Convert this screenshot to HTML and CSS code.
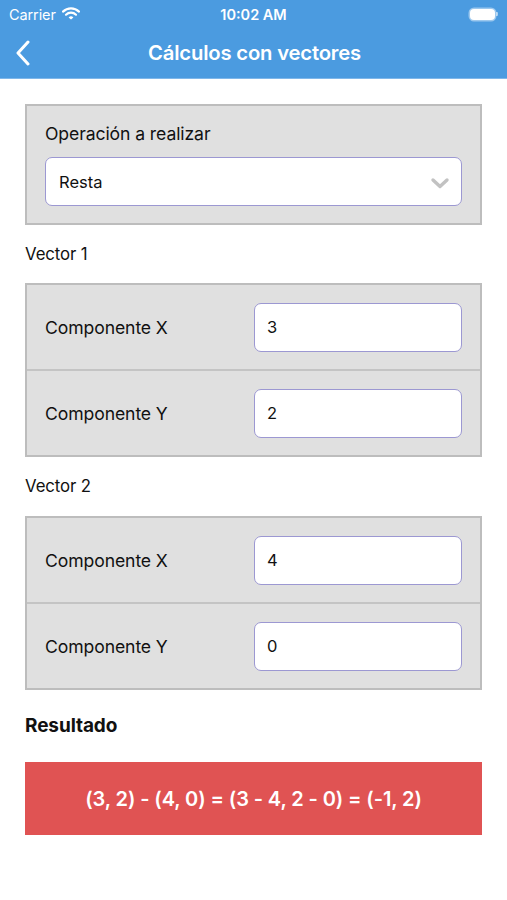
FILE: index.html
```html
<!DOCTYPE html>
<html lang="es">
<head>
<meta charset="utf-8">
<title>Cálculos con vectores</title>
<link rel="stylesheet" href="styles.css">
</head>
<body>
<header class="top">
  <div class="status">
    <div class="status-left">
      <span class="carrier">Carrier</span>
      <svg class="wifi" width="18" height="13" viewBox="0 0 18 13">
        <path d="M1 4.6 A11.5 11.5 0 0 1 17 4.6" fill="none" stroke="#fff" stroke-width="2.2" stroke-linecap="round"/>
        <path d="M4 7.7 A7.2 7.2 0 0 1 14 7.7" fill="none" stroke="#fff" stroke-width="2.2" stroke-linecap="round"/>
        <path d="M6.6 10.4 L9 12.6 L11.4 10.4 A3.4 3.4 0 0 0 6.6 10.4 Z" fill="#fff"/>
      </svg>
    </div>
    <span class="time">10:02 AM</span>
    <div class="battery"><span class="battery-body"></span><span class="battery-nub"></span></div>
  </div>
  <nav class="navbar">
    <svg class="back" width="16" height="26" viewBox="0 0 16 26">
      <path d="M13 2 L3 13 L13 24" fill="none" stroke="#fff" stroke-width="3" stroke-linecap="round" stroke-linejoin="round"/>
    </svg>
    <h1 class="title">Cálculos con vectores</h1>
  </nav>
</header>

<main class="content">
  <section class="panel op-panel">
    <div class="op-label">Operación a realizar</div>
    <div class="select">
      <span>Resta</span>
      <svg class="chev" width="20" height="12" viewBox="0 0 20 12">
        <path d="M3 3 L10 9.5 L17 3" fill="none" stroke="#c2c2c2" stroke-width="3.4" stroke-linecap="round" stroke-linejoin="round"/>
      </svg>
    </div>
  </section>

  <div class="section-label">Vector 1</div>
  <section class="panel">
    <div class="row">
      <span class="row-label">Componente X</span>
      <div class="field">3</div>
    </div>
    <div class="row">
      <span class="row-label">Componente Y</span>
      <div class="field">2</div>
    </div>
  </section>

  <div class="section-label v2">Vector 2</div>
  <section class="panel">
    <div class="row">
      <span class="row-label">Componente X</span>
      <div class="field">4</div>
    </div>
    <div class="row">
      <span class="row-label">Componente Y</span>
      <div class="field">0</div>
    </div>
  </section>

  <div class="result-label">Resultado</div>
  <div class="result">(3, 2) - (4, 0) = (3 - 4, 2 - 0) = (-1, 2)</div>
</main>
</body>
</html>
```

FILE: styles.css
```css
* { box-sizing: border-box; }
html, body { margin: 0; padding: 0; background: #fff; }
body {
  width: 507px;
  font-family: Inter, "Noto Sans", "Liberation Sans", sans-serif;
  color: #111;
}
.top {
  background: #4b9be0;
  color: #fff;
  height: 79px;
  border-bottom: 1px solid #7fb7ea;
}
.status {
  height: 30px;
  display: flex;
  align-items: center;
  justify-content: space-between;
  padding: 0 9px 2px 9px;
  position: relative;
}
.status-left { display: flex; align-items: center; gap: 6px; }
.carrier { font-size: 14.5px; font-weight: 400; letter-spacing: -0.1px; }
.wifi { margin-top: -2px; }
.time {
  position: absolute;
  left: 0; right: 0;
  text-align: center;
  font-size: 14.5px;
  font-weight: 600;
  pointer-events: none;
}
.battery { display: flex; align-items: center; gap: 1px; }
.battery-body {
  width: 25px; height: 11px;
  border-radius: 4px;
  background: #fff;
  box-shadow: 0 0 0 1.5px rgba(255,255,255,0.45);
}
.battery-nub { width: 2px; height: 4px; background: rgba(255,255,255,0.55); border-radius: 0 1px 1px 0; }
.navbar {
  height: 48px;
  display: flex;
  align-items: center;
  position: relative;
  padding-left: 15px;
}
.back { display: block; margin-top: -2px; }
.title {
  position: absolute;
  left: 0; right: 0;
  margin: 0;
  text-align: center;
  font-size: 20.3px;
  font-weight: 600;
  letter-spacing: -0.2px;
  padding-left: 2px;
  margin-top: -3px;
}
.content {
  padding: 25px 25px 40px 25px;
}
.panel {
  background: #e0e0e0;
  border: 2px solid #bdbdbd;
}
.op-panel {
  padding: 17px 18px 17px 18px;
}
.op-label {
  font-size: 17.6px;
  line-height: 22px;
  margin-bottom: 12px;
  letter-spacing: -0.1px;
}
.select {
  height: 49px;
  background: #fff;
  border: 1.5px solid #9c98d2;
  border-radius: 7px;
  display: flex;
  align-items: center;
  justify-content: space-between;
  padding: 0 11px 0 13px;
  font-size: 16.5px;
}
.chev { display: block; margin-top: 2px; }
.section-label {
  height: 58px;
  line-height: 58px;
  font-size: 16.8px;
  letter-spacing: -0.1px;
}
.section-label.v2 { height: 59px; line-height: 59px; }
.row {
  height: 84px;
  display: flex;
  align-items: center;
  justify-content: space-between;
  padding: 0 18px;
}
.row + .row {
  height: 86px;
  border-top: 2px solid #c4c4c4;
}
.row-label {
  font-size: 17.6px;
  letter-spacing: -0.1px;
}
.field {
  width: 208px;
  height: 49px;
  background: #fff;
  border: 1.5px solid #9c98d2;
  border-radius: 7px;
  display: flex;
  align-items: center;
  padding-left: 12px;
  font-size: 16.5px;
}
.result-label {
  height: 72px;
  line-height: 72px;
  font-size: 19px;
  font-weight: 700;
  letter-spacing: -0.1px;
}
.result {
  height: 73px;
  background: #e05353;
  color: #fff;
  display: flex;
  align-items: center;
  justify-content: center;
  font-size: 20px;
  font-weight: 600;
  letter-spacing: -0.1px;
}
```
